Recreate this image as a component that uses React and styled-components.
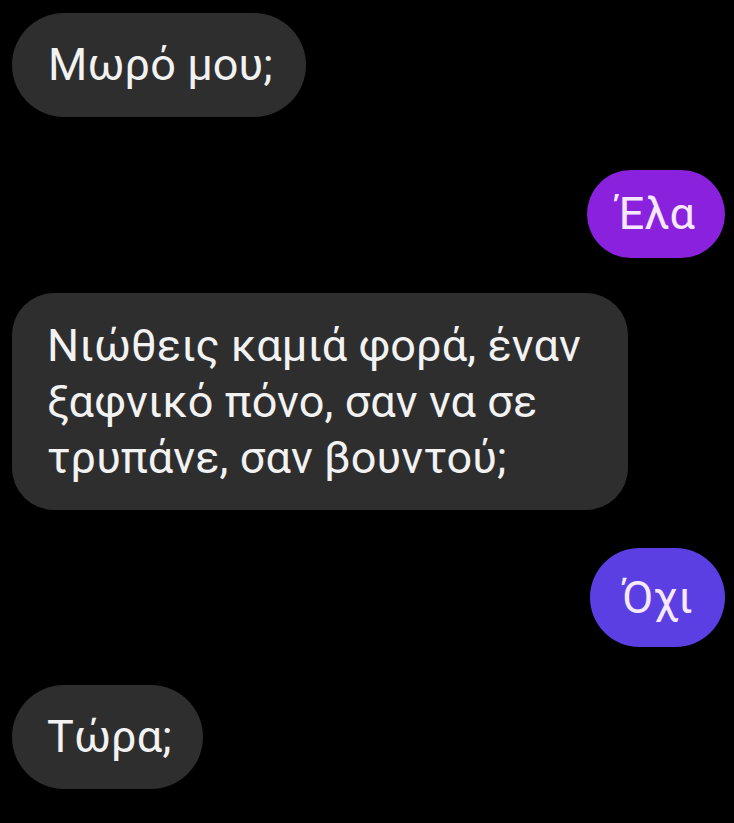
import React from "react";
import styled, { createGlobalStyle } from "styled-components";

const GlobalStyle = createGlobalStyle`
  html, body {
    margin: 0;
    padding: 0;
    background: #000;
  }
  body {
    font-family: Roboto, "Noto Sans", "DejaVu Sans", sans-serif;
  }
`;

const Chat = styled.div`
  width: 734px;
  height: 823px;
  box-sizing: border-box;
  padding: 13px 9px 0 12px;
  display: flex;
  flex-direction: column;
  background: #000;
  overflow: hidden;
`;

const Bubble = styled.div`
  align-self: ${(p) => (p.$mine ? "flex-end" : "flex-start")};
  box-sizing: border-box;
  margin-top: ${(p) => p.$gap || 0}px;
  width: ${(p) => p.$width || "auto"};
  padding: ${(p) => p.$pad || "24px 33px 24px 36px"};
  border-radius: ${(p) => p.$radius || 52}px;
  background: ${(p) => p.$bg || "#2e2e2e"};
  color: ${(p) => (p.$mine ? "#f6e9ff" : "#f2f2f2")};
  font-size: 45px;
  line-height: 56px;
  letter-spacing: 0.1px;
`;

const messages = [
  { text: "Μωρό μου;", gap: 0 },
  { text: "Έλα", mine: true, gap: 53, bg: "#8a22dd", pad: "16px 30px", radius: 44 },
  {
    text: "Νιώθεις καμιά φορά, έναν ξαφνικό πόνο, σαν να σε τρυπάνε, σαν βουντού;",
    gap: 35,
    width: "616px",
    pad: "25px 28px 24px 35px",
    radius: 42,
  },
  { text: "Όχι", mine: true, gap: 38, bg: "#5b3fe2", pad: "22px 32px 21px", radius: 50 },
  { text: "Τώρα;", gap: 38, pad: "24px 31px 24px 35px" },
];

const App = () => {
  return (
    <>
      <GlobalStyle />
      <Chat>
        {messages.map((m, i) => (
          <Bubble
            key={i}
            $mine={m.mine}
            $gap={m.gap}
            $bg={m.bg}
            $pad={m.pad}
            $radius={m.radius}
            $width={m.width}
          >
            {m.text}
          </Bubble>
        ))}
      </Chat>
    </>
  );
};

export default App;
